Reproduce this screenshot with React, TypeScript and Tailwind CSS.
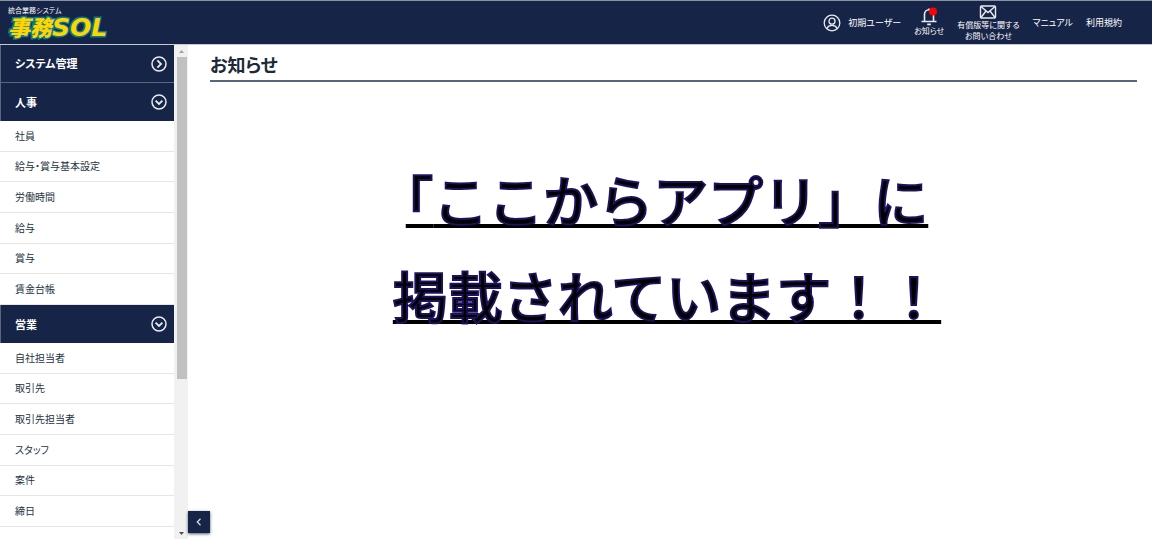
import { ReactNode } from 'react';

interface MenuSection {
  title: string;
  open: boolean;
  items: string[];
}

const SECTIONS: MenuSection[] = [
  { title: 'システム管理', open: false, items: [] },
  {
    title: '人事',
    open: true,
    items: ['社員', '給与・賞与基本設定', '労働時間', '給与', '賞与', '賃金台帳'],
  },
  {
    title: '営業',
    open: true,
    items: ['自社担当者', '取引先', '取引先担当者', 'スタッフ', '案件', '締日'],
  },
];

function CircleChevron({ down }: { down: boolean }) {
  return (
    <svg viewBox="0 0 16 16" className="h-4 w-4" fill="none" stroke="#e8ebf0" strokeWidth="1.5">
      <circle cx="8" cy="8" r="7" />
      <path d={down ? 'M4.6 6.6 8 10l3.4-3.4' : 'M6.4 4.4 10 8l-3.6 3.6'} strokeWidth="1.8" />
    </svg>
  );
}

function UserIcon() {
  return (
    <svg viewBox="0 0 18 18" className="h-[18px] w-[18px]" fill="none" stroke="#e8ebf0" strokeWidth="1.3">
      <circle cx="9" cy="9" r="7.8" />
      <circle cx="9" cy="7.2" r="3" />
      <path d="M3.8 14.4c1-2.2 2.8-3 5.2-3s4.2.8 5.2 3" />
    </svg>
  );
}

function BellIcon() {
  return (
    <svg viewBox="0 0 18 20" className="h-5 w-[18px]" fill="none" stroke="#e8ebf0" strokeWidth="1.6">
      <path d="M4.5 14V7.500a4.500 4.800 0 0 1 9 0V14M1.500 14.500h15M9 3V1.500" />
      <path d="M7.200 17.400h3.600" strokeWidth="1.800" />
      <circle cx="13" cy="4.500" r="4" fill="#ff0000" stroke="none" />
    </svg>
  );
}

function MailIcon() {
  return (
    <svg viewBox="0 0 18 14" className="h-[14px] w-[18px]" fill="none" stroke="#e8ebf0" strokeWidth="1.4">
      <rect x="1.500" y="1" width="15" height="12" rx="1" />
      <path d="M2 1.500 9 7.500l7-6M2 12.500l5-6.500M16 12.500 11 6" />
    </svg>
  );
}

function HeaderLink({ children }: { children: ReactNode }) {
  return (
    <a href="#" className="flex flex-col items-center whitespace-nowrap">
      {children}
    </a>
  );
}

function Header() {
  return (
    <header className="flex h-[45px] shrink-0 justify-between border-t border-b border-t-[#8a92a3] border-b-[#c5cad3] bg-[#162447] pr-[30px] pl-2 text-white">
      <a href="#" className="flex flex-col pt-1">
        <span className="text-[7px] leading-[10px]">統合業務システム</span>
        <span className="flex items-start text-[#ffd500] italic [-webkit-text-stroke:3px_#087a8c] [paint-order:stroke_fill]">
          <span className="text-[22px] leading-[22px] font-black">事務</span>
          <span className="font-['DejaVu_Sans'] text-[25px] leading-[26px] font-bold">SOL</span>
        </span>
      </a>
      <nav className="flex items-center gap-[13px] text-[9px] leading-[12px]">
        <a href="#" className="flex items-center gap-[7px] whitespace-nowrap">
          <UserIcon />
          初期ユーザー
        </a>
        <HeaderLink>
          <BellIcon />
          <span className="pb-1 text-[8px] leading-[8px]">お知らせ</span>
        </HeaderLink>
        <HeaderLink>
          <MailIcon />
          <span className="text-center text-[8px] leading-[11px]">
            有償版等に関する
            <br />
            お問い合わせ
          </span>
        </HeaderLink>
        <HeaderLink>マニュアル</HeaderLink>
        <HeaderLink>利用規約</HeaderLink>
      </nav>
    </header>
  );
}

function Sidebar() {
  return (
    <aside className="flex shrink-0">
      <nav className="w-[174px] overflow-hidden">
        {SECTIONS.map((section) => (
          <section key={section.title}>
            <button
              type="button"
              className={`flex h-[38px] w-full items-center justify-between border-l border-[#5b6680] bg-[#162447] pr-[7px] pl-[14px] text-[11px] font-bold text-white ${section.open ? '' : 'border-b'}`}
            >
              {section.title}
              <CircleChevron down={section.open} />
            </button>
            {section.open && (
              <ul className="grid h-[184px] auto-rows-fr">
                {section.items.map((item) => (
                  <li key={item} className="border-b border-[#e6e6e6]">
                    <a href="#" className="flex h-full items-center pl-[15px] text-[10px] leading-[12px] text-[#26333f]">
                      {item}
                    </a>
                  </li>
                ))}
              </ul>
            )}
          </section>
        ))}
      </nav>
      <div className="flex w-[14px] flex-col items-center bg-[#f1f1f1]">
        <svg viewBox="0 0 13 12" className="h-3 w-[13px] shrink-0" fill="#a3a3a3">
          <path d="M4 8h5L6.500 5z" />
        </svg>
        <div className="flex w-full flex-1 flex-col items-end pr-px">
          <div className="h-[68.5%] w-[10px] bg-[#c1c1c1]" />
        </div>
        <svg viewBox="0 0 13 12" className="h-3 w-[13px] shrink-0" fill="#505050">
          <path d="M4 5h5L6.500 8z" />
        </svg>
      </div>
    </aside>
  );
}

export default function App() {
  return (
    <div className="flex h-screen flex-col overflow-hidden bg-white font-['Noto_Sans_CJK_JP',sans-serif] [font-feature-settings:'palt']">
      <Header />
      <div className="flex min-h-0 flex-1">
        <Sidebar />
        <div className="flex w-[22px] shrink-0 flex-col justify-end pb-[6px]">
          <button
            type="button"
            aria-label="メニューを閉じる"
            className="flex h-[22px] w-full items-center justify-center bg-[#162447] shadow-sm shadow-gray-500"
          >
            <svg viewBox="0 0 8 8" className="h-2 w-2" fill="none" stroke="#d5d9e0" strokeWidth="1.3">
              <path d="M5.500.8 2.300 4l3.200 3.200" />
            </svg>
          </button>
        </div>
        <main className="min-w-0 flex-1 pr-[15px]">
          <h1 className="border-b-2 border-[#5a6580] pt-[5px] pb-[2px] text-[18px] leading-[28px] font-bold text-[#1c2a38]">
            お知らせ
          </h1>
          <p className="pt-[68px] pr-[13px] text-center text-[55px] leading-[96px] font-medium text-black underline decoration-black decoration-4 underline-offset-[2px] [font-feature-settings:normal] [text-decoration-skip-ink:none]">
            <span className="[-webkit-text-stroke:2px_#1f1060]">
              <span className="[font-feature-settings:'halt']">「</span>ここからアプリ」に
              <br />
              掲載されています！！
            </span>
          </p>
        </main>
      </div>
    </div>
  );
}
